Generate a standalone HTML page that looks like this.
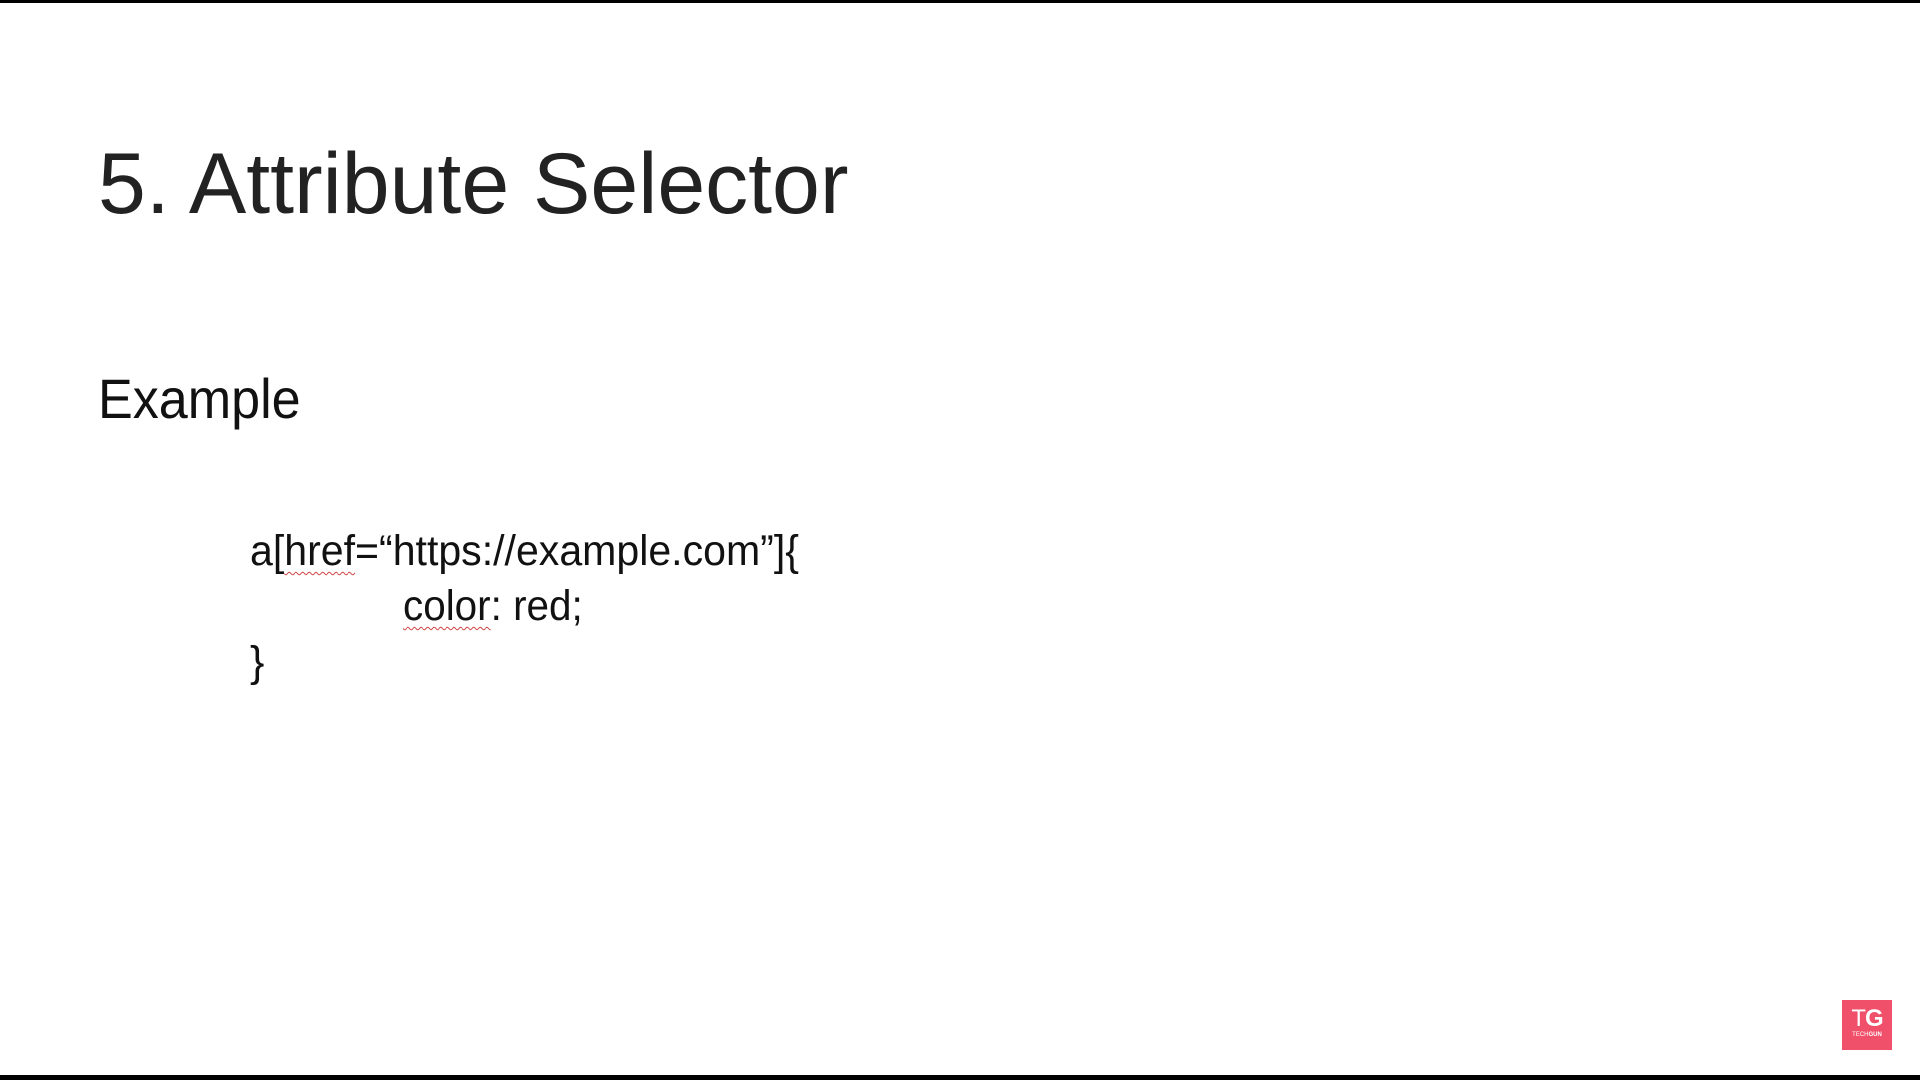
<!DOCTYPE html>
<html><head><meta charset="utf-8"><style>
html,body{margin:0;padding:0;width:1920px;height:1080px;overflow:hidden;background:#fff;position:relative;font-family:"Liberation Sans",sans-serif;color:#111}
.t{position:absolute;white-space:nowrap;line-height:1;transform-origin:0 0}
.w{text-decoration:underline wavy #d04040;text-decoration-thickness:1px;text-underline-offset:6px}
</style></head><body>
<div style="position:absolute;left:0;top:0;width:1920px;height:3px;background:#000"></div>
<div style="position:absolute;left:0;top:1075px;width:1920px;height:5px;background:#000"></div>
<div class="t" style="left:98px;top:141px;font-size:86px;color:#222">5. Attribute Selector</div>
<div class="t" style="left:98px;top:371px;font-size:56px;transform:scaleX(0.93)">Example</div>
<div class="t" style="left:250px;top:530px;font-size:43px;transform:scaleX(0.955)">a[<span class="w">href</span>=“https://example.com”]{</div>
<div class="t" style="left:403px;top:585px;font-size:43px;transform:scaleX(0.94)"><span class="w">color</span>: red;</div>
<div class="t" style="left:250px;top:641px;font-size:43px">}</div>
<div style="position:absolute;left:1842px;top:1000px;width:50px;height:50px;background:#f0506a;color:#fff;text-align:center">
<div style="font-size:24px;line-height:24px;margin-top:7px;font-weight:bold;letter-spacing:-1px"><span style="font-weight:normal">T</span>G</div>
<div style="font-size:6px;line-height:8px">TECH<b>GUN</b></div>
</div>
</body></html>
